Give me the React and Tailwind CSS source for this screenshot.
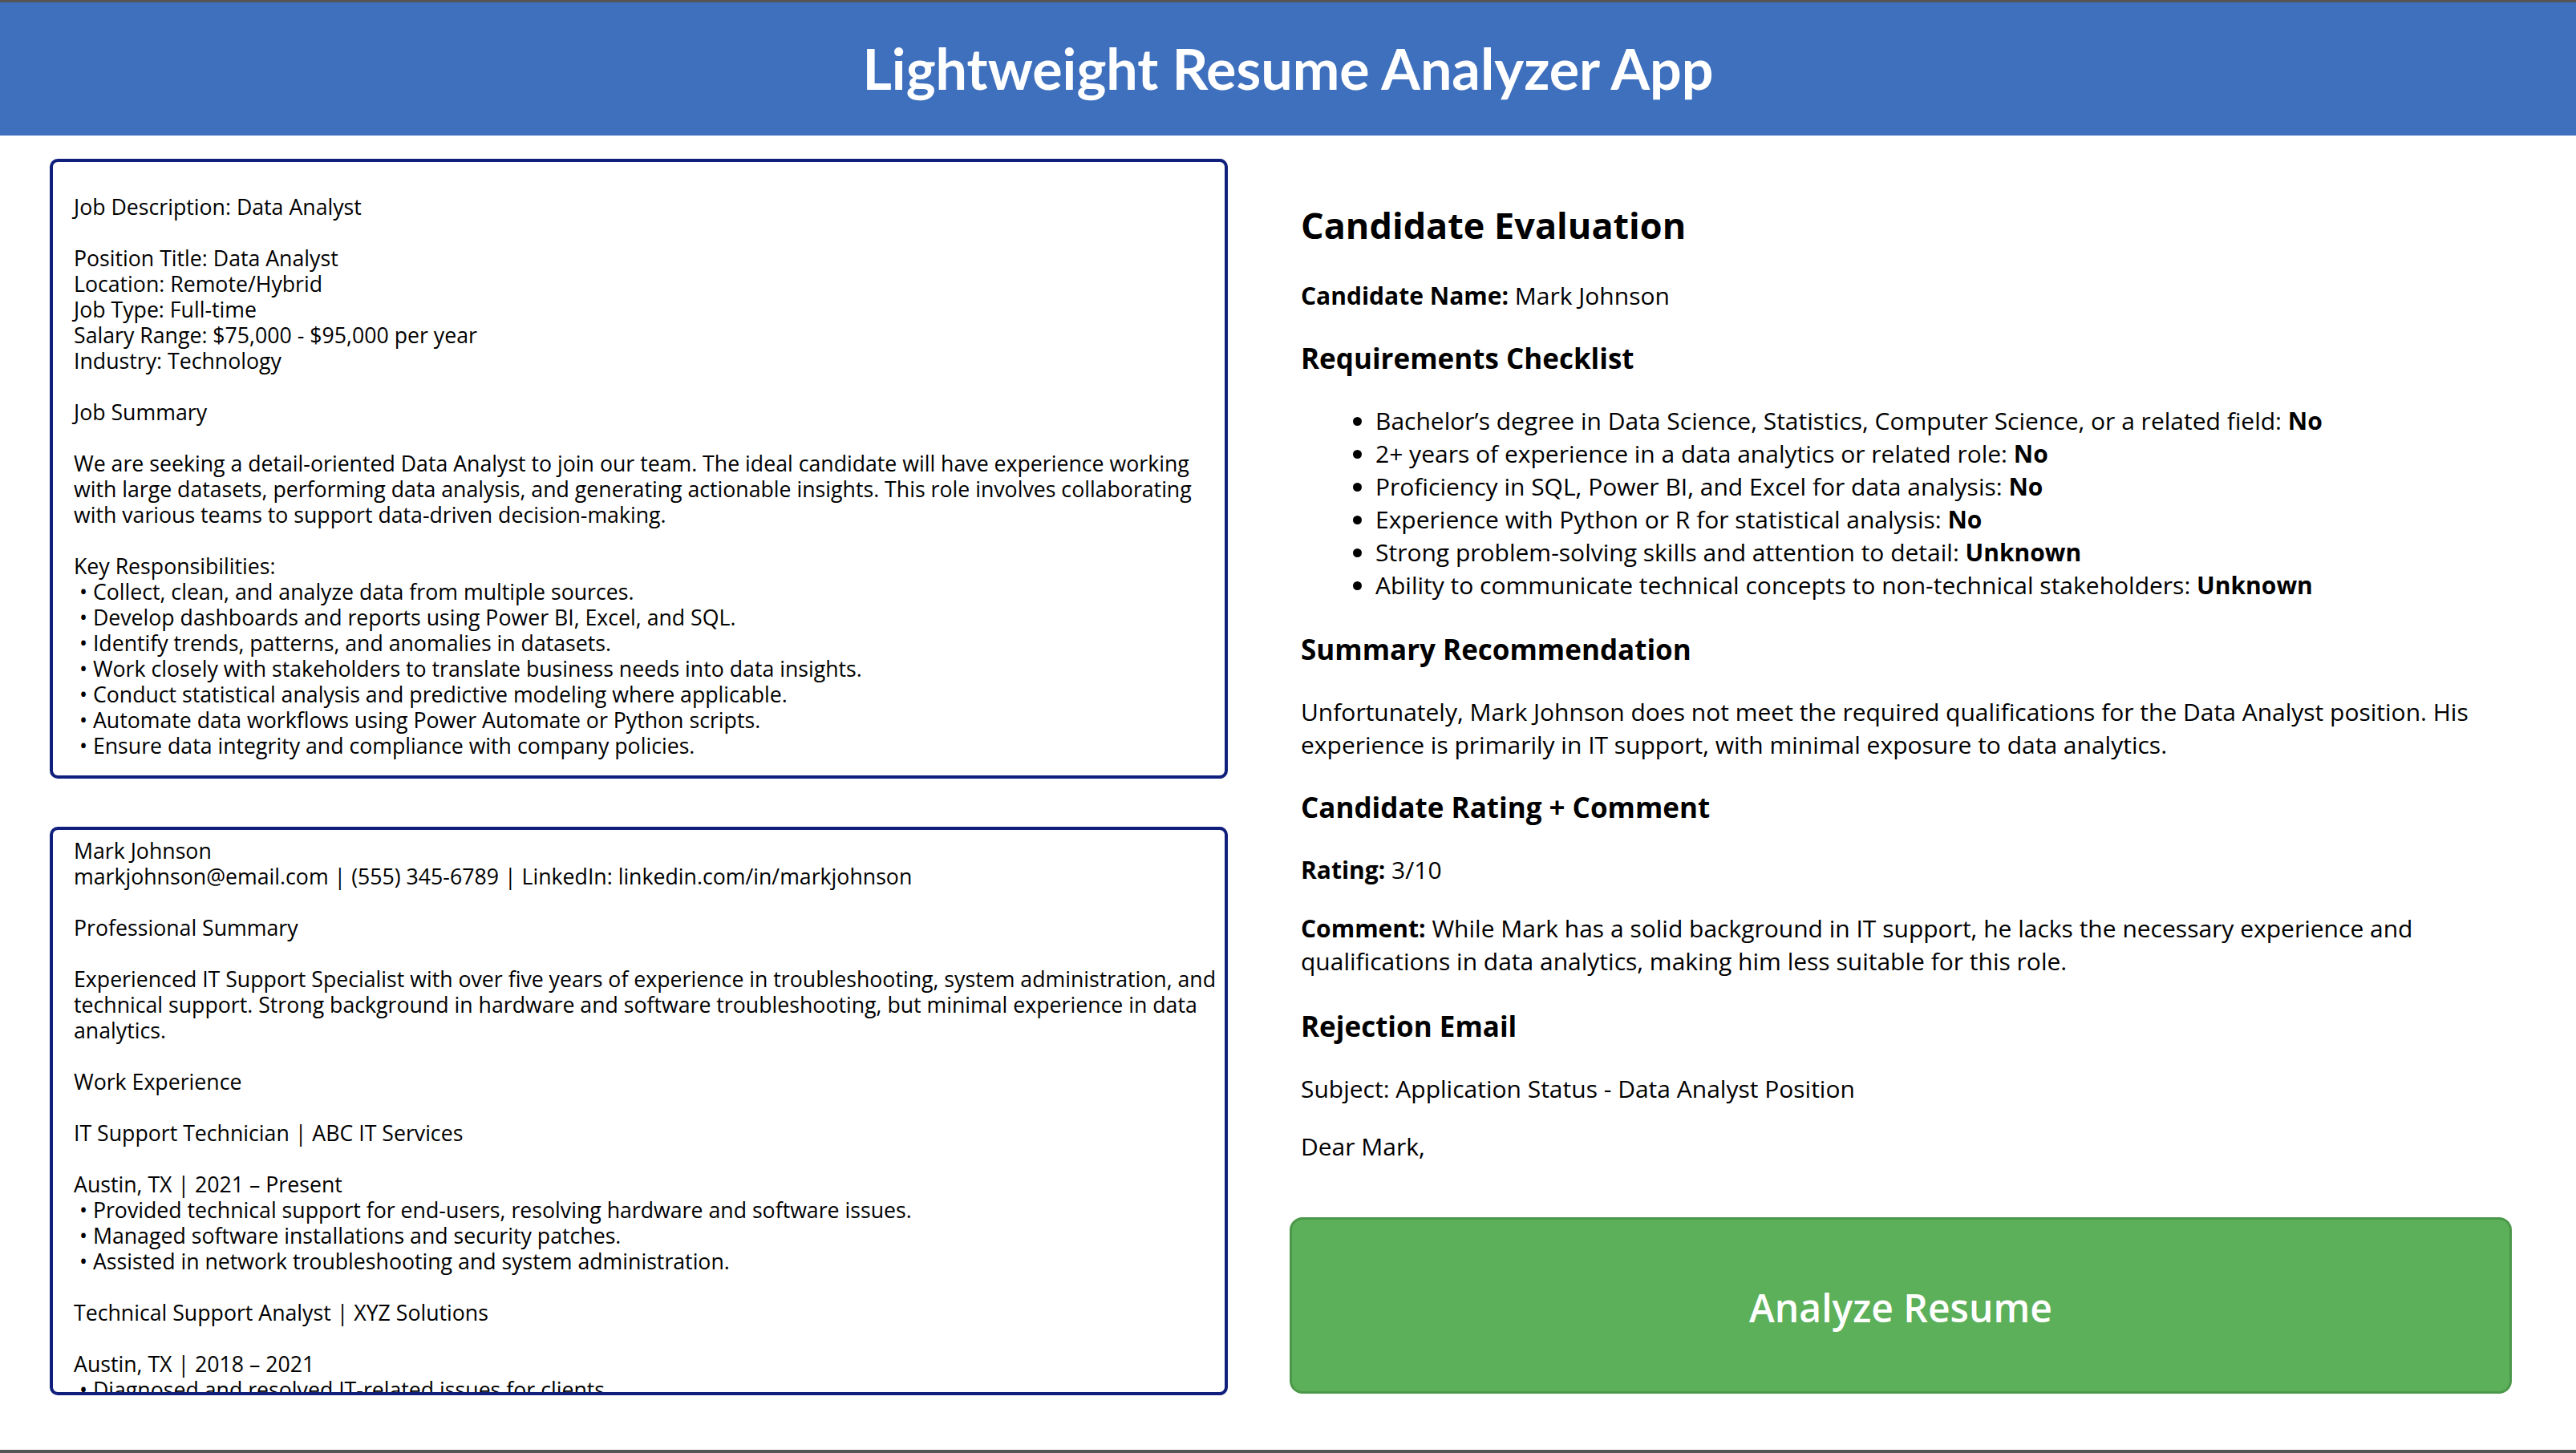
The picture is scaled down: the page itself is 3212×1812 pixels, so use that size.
const JOB_TEXT = `Job Description: Data Analyst

Position Title: Data Analyst
Location: Remote/Hybrid
Job Type: Full-time
Salary Range: $75,000 - $95,000 per year
Industry: Technology

Job Summary

We are seeking a detail-oriented Data Analyst to join our team. The ideal candidate will have experience working
with large datasets, performing data analysis, and generating actionable insights. This role involves collaborating
with various teams to support data-driven decision-making.

Key Responsibilities:
 • Collect, clean, and analyze data from multiple sources.
 • Develop dashboards and reports using Power BI, Excel, and SQL.
 • Identify trends, patterns, and anomalies in datasets.
 • Work closely with stakeholders to translate business needs into data insights.
 • Conduct statistical analysis and predictive modeling where applicable.
 • Automate data workflows using Power Automate or Python scripts.
 • Ensure data integrity and compliance with company policies.`

const RESUME_TEXT = `Mark Johnson
markjohnson@email.com | (555) 345-6789 | LinkedIn: linkedin.com/in/markjohnson

Professional Summary

Experienced IT Support Specialist with over five years of experience in troubleshooting, system administration, and
technical support. Strong background in hardware and software troubleshooting, but minimal experience in data
analytics.

Work Experience

IT Support Technician | ABC IT Services

Austin, TX | 2021 – Present
 • Provided technical support for end-users, resolving hardware and software issues.
 • Managed software installations and security patches.
 • Assisted in network troubleshooting and system administration.

Technical Support Analyst | XYZ Solutions

Austin, TX | 2018 – 2021
 • Diagnosed and resolved IT-related issues for clients.`

const CHECKLIST = [
  ['Bachelor’s degree in Data Science, Statistics, Computer Science, or a related field:', 'No'],
  ['2+ years of experience in a data analytics or related role:', 'No'],
  ['Proficiency in SQL, Power BI, and Excel for data analysis:', 'No'],
  ['Experience with Python or R for statistical analysis:', 'No'],
  ['Strong problem-solving skills and attention to detail:', 'Unknown'],
  ['Ability to communicate technical concepts to non-technical stakeholders:', 'Unknown'],
]

function SectionTitle({ children }) {
  return <h3 className="text-[35px] font-bold leading-[49px] mb-[33px]">{children}</h3>
}

export default function App() {
  return (
    <div
      className="w-[3212px] h-[1812px] flex flex-col bg-white text-black border-t-[3px] border-b-[4px] border-[#555555] overflow-hidden"
      style={{ fontFamily: '"Open Sans", "Liberation Sans", sans-serif' }}
    >
      <header className="h-[166px] shrink-0 bg-[#3e70bd] flex items-center justify-center pb-[3px]">
        <h1
          className="text-white text-[70px] font-bold leading-none"
          style={{ fontFamily: 'Lato, "Open Sans", sans-serif' }}
        >
          Lightweight Resume Analyzer App
        </h1>
      </header>

      <main className="flex-1 grid grid-cols-[1469px_1524px] gap-[77px] pl-[62px] pt-[29px]">
        {/* left: job description + resume */}
        <div className="flex flex-col gap-[60px]">
          <div className="h-[773px] border-[4px] border-[#101f7c] rounded-[10px] pl-[26px] pr-[4px] pt-[40px] overflow-hidden">
            <div className="whitespace-pre text-[26.7px] leading-[32px]">{JOB_TEXT}</div>
          </div>
          <div className="h-[709px] border-[4px] border-[#101f7c] rounded-[10px] pl-[26px] pr-[4px] pt-[10px] overflow-hidden">
            <div className="whitespace-pre text-[26.7px] leading-[32px]">{RESUME_TEXT}</div>
          </div>
        </div>

        {/* right: evaluation output */}
        <div className="flex flex-col">
          <div className="h-[1285px] overflow-hidden px-[14px] pt-[50px] text-[30px] leading-[41px]">
            <h2 className="text-[45px] font-bold leading-[65px] mb-[35px]">Candidate Evaluation</h2>
            <p className="mb-[33px]">
              <span className="font-bold">Candidate Name:</span> Mark Johnson
            </p>

            <SectionTitle>Requirements Checklist</SectionTitle>
            <ul className="list-disc pl-[93px] mb-[35px]">
              {CHECKLIST.map(([req, ans]) => (
                <li key={req}>
                  {req} <span className="font-bold">{ans}</span>
                </li>
              ))}
            </ul>

            <SectionTitle>Summary Recommendation</SectionTitle>
            <p className="mb-[33px]">
              Unfortunately, Mark Johnson does not meet the required qualifications for the Data Analyst position. His
              experience is primarily in IT support, with minimal exposure to data analytics.
            </p>

            <SectionTitle>Candidate Rating + Comment</SectionTitle>
            <p className="mb-[32px]">
              <span className="font-bold">Rating:</span> 3/10
            </p>
            <p className="mb-[36px]">
              <span className="font-bold">Comment:</span> While Mark has a solid background in IT support, he lacks the
              necessary experience and qualifications in data analytics, making him less suitable for this role.
            </p>

            <SectionTitle>Rejection Email</SectionTitle>
            <p className="mb-[31px]">Subject: Application Status - Data Analyst Position</p>
            <p>Dear Mark,</p>
          </div>

          <button
            type="button"
            className="mt-[35px] h-[220px] w-full pt-[6px] bg-[#5cb05a] border-[3px] border-[#4c984a] rounded-[16px] text-white text-[48px] font-semibold"
          >
            Analyze Resume
          </button>
        </div>
      </main>
    </div>
  )
}
